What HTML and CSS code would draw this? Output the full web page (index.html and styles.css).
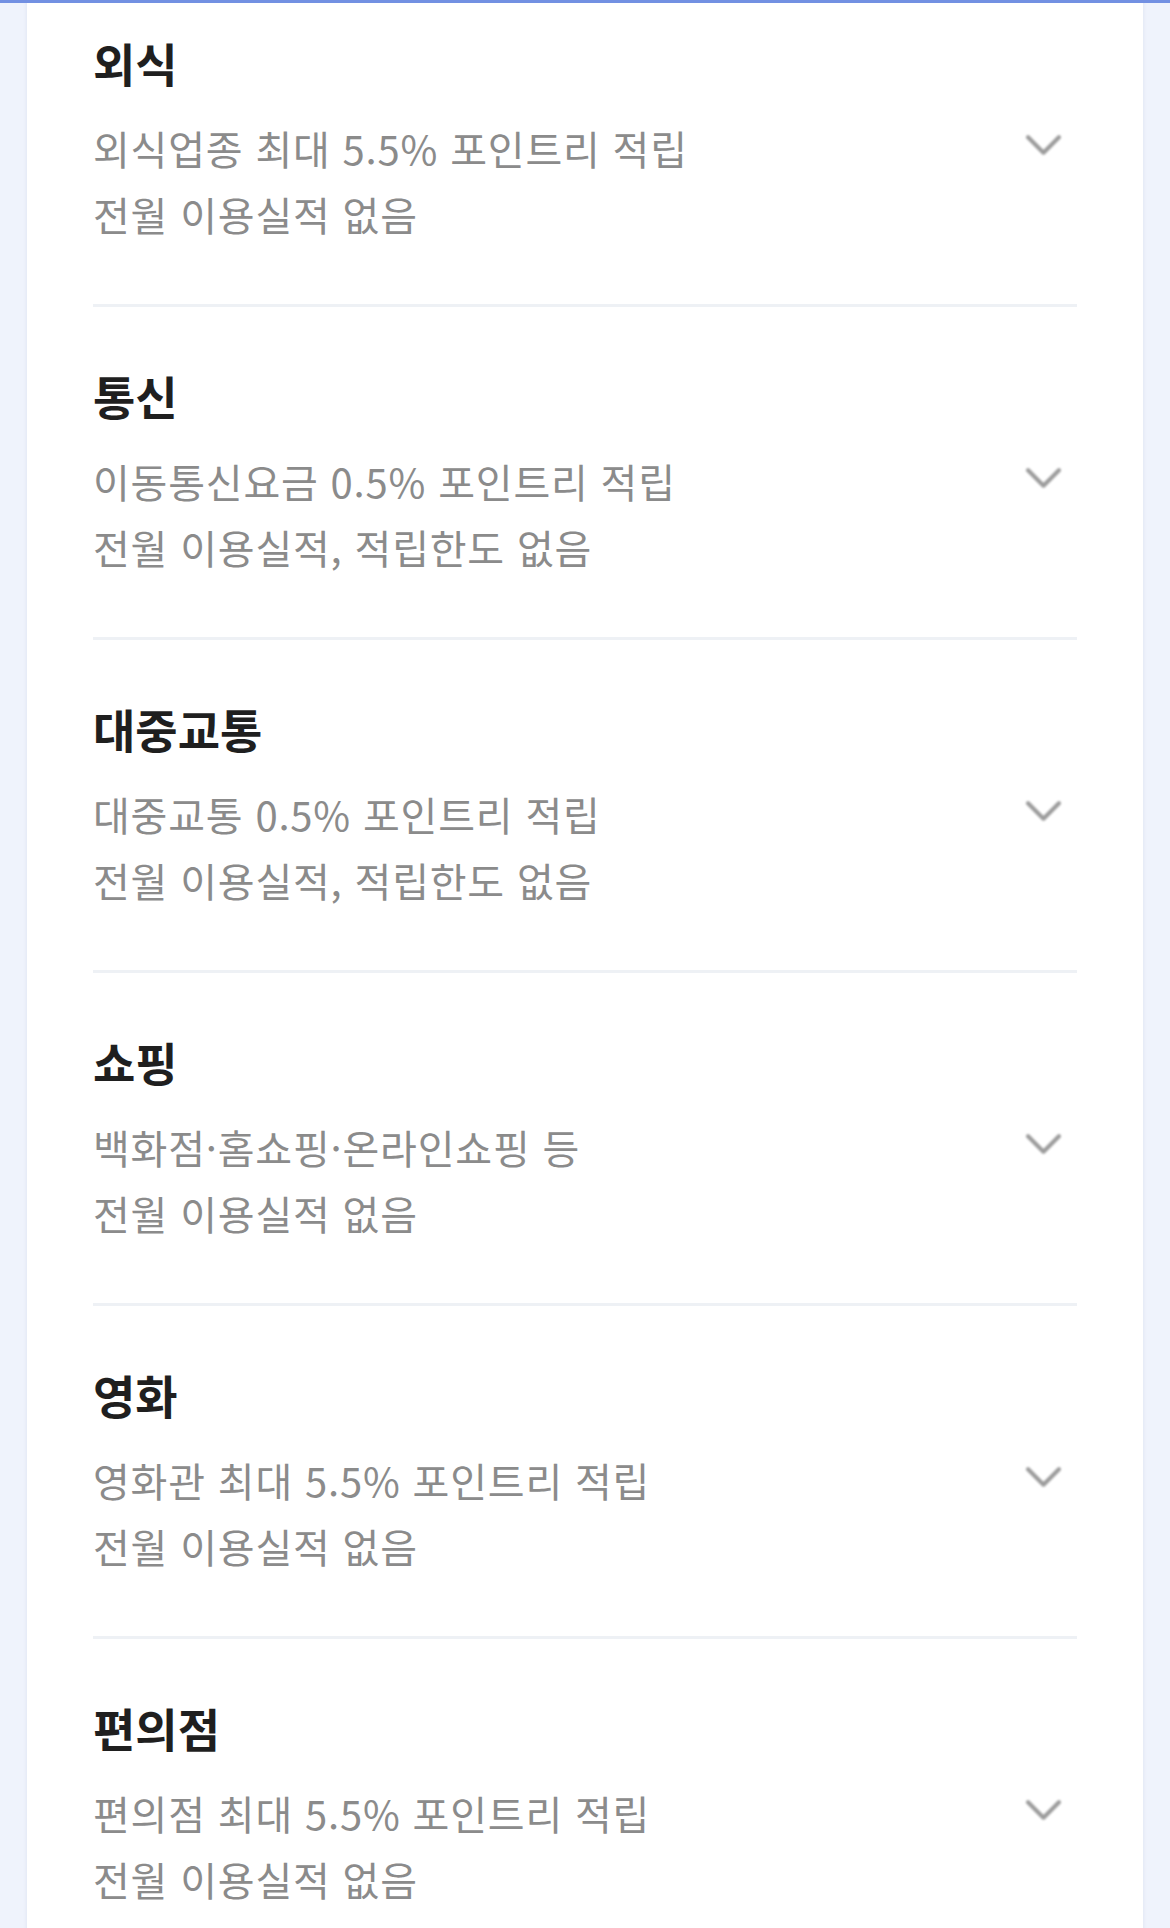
FILE: index.html
```html
<!DOCTYPE html>
<html lang="ko">
<head>
    <meta charset="UTF-8">
    <title>혜택 안내</title>
    <link rel="stylesheet" href="styles.css">
</head>
<body>
    <div class="top-line"></div>
    <div class="card">
        <ul class="benefit-list">
            <li class="benefit">
                <div class="benefit-text">
                    <h3 class="benefit-title">외식</h3>
                    <p class="benefit-desc">외식업종 최대 5.5% 포인트리 적립</p>
                    <p class="benefit-desc">전월 이용실적 없음</p>
                </div>
                <svg class="chevron" viewBox="0 0 36 22"><polyline points="3,3 18,18 33,3" /></svg>
            </li>
            <li class="benefit">
                <div class="benefit-text">
                    <h3 class="benefit-title">통신</h3>
                    <p class="benefit-desc">이동통신요금 0.5% 포인트리 적립</p>
                    <p class="benefit-desc">전월 이용실적, 적립한도 없음</p>
                </div>
                <svg class="chevron" viewBox="0 0 36 22"><polyline points="3,3 18,18 33,3" /></svg>
            </li>
            <li class="benefit">
                <div class="benefit-text">
                    <h3 class="benefit-title">대중교통</h3>
                    <p class="benefit-desc">대중교통 0.5% 포인트리 적립</p>
                    <p class="benefit-desc">전월 이용실적, 적립한도 없음</p>
                </div>
                <svg class="chevron" viewBox="0 0 36 22"><polyline points="3,3 18,18 33,3" /></svg>
            </li>
            <li class="benefit">
                <div class="benefit-text">
                    <h3 class="benefit-title">쇼핑</h3>
                    <p class="benefit-desc">백화점·홈쇼핑·온라인쇼핑 등</p>
                    <p class="benefit-desc">전월 이용실적 없음</p>
                </div>
                <svg class="chevron" viewBox="0 0 36 22"><polyline points="3,3 18,18 33,3" /></svg>
            </li>
            <li class="benefit">
                <div class="benefit-text">
                    <h3 class="benefit-title">영화</h3>
                    <p class="benefit-desc">영화관 최대 5.5% 포인트리 적립</p>
                    <p class="benefit-desc">전월 이용실적 없음</p>
                </div>
                <svg class="chevron" viewBox="0 0 36 22"><polyline points="3,3 18,18 33,3" /></svg>
            </li>
            <li class="benefit">
                <div class="benefit-text">
                    <h3 class="benefit-title">편의점</h3>
                    <p class="benefit-desc">편의점 최대 5.5% 포인트리 적립</p>
                    <p class="benefit-desc">전월 이용실적 없음</p>
                </div>
                <svg class="chevron" viewBox="0 0 36 22"><polyline points="3,3 18,18 33,3" /></svg>
            </li>
        </ul>
    </div>
</body>
</html>
```

FILE: styles.css
```css
html, body {
    margin: 0;
    padding: 0;
    background-color: #eff3fc;
    font-family: "Noto Sans CJK KR", "Noto Sans", sans-serif;
    overflow: hidden;
}
.top-line {
    position: absolute; /* header edge over the scrolled list */
    top: 0;
    left: 0;
    right: 0;
    height: 3px;
    background-color: #7290e2;
    z-index: 2;
}
.card {
    margin: -26px 27px 0;
    padding: 0 66px;
    background-color: #fff;
    box-shadow: 0 0 4px rgba(120, 135, 170, 0.15);
}
.benefit-list {
    list-style: none;
    margin: 0;
    padding: 0;
}
.benefit {
    display: flex;
    align-items: center;
    justify-content: space-between;
    padding: 60px 0 57px;
    border-bottom: 3px solid #eef1f5;
}
.benefit-title {
    margin: 0 0 25px;
    font-size: 46px;
    line-height: 56px;
    font-weight: bold;
    color: #1f1f1f;
}
.benefit-desc {
    margin: 0;
    font-size: 40px;
    line-height: 66px;
    letter-spacing: 0.8px;
    color: #8b8b8b;
}
.chevron {
    width: 37px;
    height: 23px;
    margin: 10px 15px 0 0;
    fill: none;
    stroke: #9c9c9c;
    stroke-width: 4;
    stroke-linecap: round;
    stroke-linejoin: round;
    filter: blur(0.9px);
}
```
